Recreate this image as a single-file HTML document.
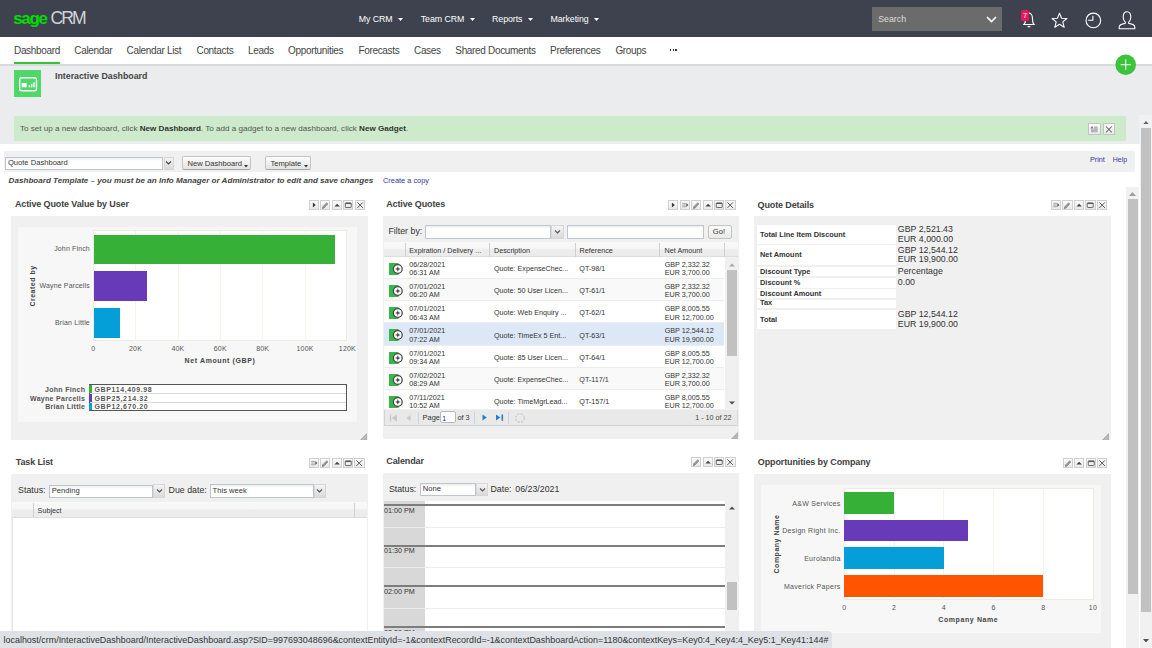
<!DOCTYPE html>
<html><head><meta charset="utf-8"><title>Sage CRM</title>
<style>
html,body{margin:0;padding:0;width:1152px;height:648px;overflow:hidden;background:#fff;font-family:"Liberation Sans",sans-serif;}
.t{position:absolute;line-height:1;white-space:nowrap;}
.r{position:absolute;}
.btn{position:absolute;box-sizing:border-box;border:1px solid #cfcfcf;background:linear-gradient(#fbfbfb,#e9e9e9);}
.inp{position:absolute;box-sizing:border-box;border:1px solid #bfc3d2;background:linear-gradient(#eee 0,#fff 3px);}
.dd{position:absolute;box-sizing:border-box;border:1px solid #d6d6d6;background:linear-gradient(#f4f4f4,#dadada);}
</style></head><body>

<div class="r" style="left:0.00px;top:0.00px;width:1152.00px;height:36.70px;background:#3d424e;"></div>
<div class="t" style="left:13.20px;top:9.65px;font-size:17px;color:#00dc00;font-weight:bold;letter-spacing:-1.35px;">sage</div>
<div class="t" style="left:50.50px;top:9.64px;font-size:17.6px;color:#d2d3d8;letter-spacing:-1.9px;">CRM</div>
<div class="t" style="left:358.70px;top:14.52px;font-size:8.8px;color:#ffffff;letter-spacing:-0.05px;">My CRM</div>
<svg class="r" style="left:398.30px;top:17.50px;" width="5" height="3" viewBox="0 0 5 3"><path d="M0 0H5L2.5 3Z" fill="#fff"/></svg>
<div class="t" style="left:420.70px;top:14.52px;font-size:8.8px;color:#ffffff;letter-spacing:-0.05px;">Team CRM</div>
<svg class="r" style="left:470.00px;top:17.50px;" width="5" height="3" viewBox="0 0 5 3"><path d="M0 0H5L2.5 3Z" fill="#fff"/></svg>
<div class="t" style="left:492.00px;top:14.52px;font-size:8.8px;color:#ffffff;letter-spacing:-0.05px;">Reports</div>
<svg class="r" style="left:527.90px;top:17.50px;" width="5" height="3" viewBox="0 0 5 3"><path d="M0 0H5L2.5 3Z" fill="#fff"/></svg>
<div class="t" style="left:550.50px;top:14.52px;font-size:8.8px;color:#ffffff;letter-spacing:-0.05px;">Marketing</div>
<svg class="r" style="left:594.00px;top:17.50px;" width="5" height="3" viewBox="0 0 5 3"><path d="M0 0H5L2.5 3Z" fill="#fff"/></svg>
<div class="r" style="left:872.40px;top:7.10px;width:129.60px;height:23.60px;background:#6b6b6b;"></div>
<div class="t" style="left:878.20px;top:14.72px;font-size:8.8px;color:#dcdcdc;">Search</div>
<svg class="r" style="left:986.00px;top:15.50px;" width="11" height="7" viewBox="0 0 11 7"><path d="M1 1L5.5 5.5L10 1" stroke="#fff" stroke-width="1.7" fill="none"/></svg>
<svg class="r" style="left:1020.00px;top:9.00px;" width="18" height="20" viewBox="0 0 18 20"><path d="M4 15.5 Q5.5 14 5.5 10 Q5.5 4.5 9 4 Q12.5 4.5 12.5 10 Q12.5 14 14 15.5 Z" stroke="#fff" stroke-width="1.1" fill="none"/><path d="M7.8 17 Q9 19 10.2 17" stroke="#fff" stroke-width="1.1" fill="none"/></svg>
<div class="r" style="left:1021.20px;top:10.10px;width:7.60px;height:11.30px;background:#e8175d;border-radius:1.8px;"></div>
<div class="t" style="left:1023.00px;top:11.91px;font-size:7.4px;color:#fff;">7</div>
<svg class="r" style="left:1051.00px;top:11.80px;" width="17" height="17" viewBox="0 0 17 17"><path d="M8.5 1.2 L10.6 6.2 L15.9 6.5 L11.8 9.9 L13.2 15.3 L8.5 12.3 L3.8 15.3 L5.2 9.9 L1.1 6.5 L6.4 6.2 Z" stroke="#fff" stroke-width="1.1" fill="none" stroke-linejoin="round"/></svg>
<svg class="r" style="left:1084.00px;top:11.00px;" width="18" height="18" viewBox="0 0 18 18"><circle cx="9.35" cy="9.4" r="7.3" stroke="#fff" stroke-width="1.1" fill="none"/><path d="M8.9 4.7 V9.2 H4.1" stroke="#fff" stroke-width="1.1" fill="none"/></svg>
<svg class="r" style="left:1117.00px;top:10.00px;" width="20" height="20" viewBox="0 0 20 20"><path d="M10 1.8 C7.3 1.8 6.2 4 6.2 6.9 C6.2 9.4 7.2 11.2 8.3 12.2 L8.3 13.4 C5 13.9 2.2 14.7 2.2 17 V18.8 H17.8 V17 C17.8 14.7 15 13.9 11.7 13.4 L11.7 12.2 C12.8 11.2 13.8 9.4 13.8 6.9 C13.8 4 12.7 1.8 10 1.8 Z" stroke="#fff" stroke-width="1.1" fill="none" stroke-linejoin="round"/></svg>
<div class="r" style="left:0.00px;top:36.70px;width:1152.00px;height:27.30px;background:#ffffff;"></div>
<div class="t" style="left:14.00px;top:45.70px;font-size:10px;color:#444;letter-spacing:-0.33px;">Dashboard</div>
<div class="t" style="left:74.30px;top:45.70px;font-size:10px;color:#444;letter-spacing:-0.33px;">Calendar</div>
<div class="t" style="left:126.60px;top:45.70px;font-size:10px;color:#444;letter-spacing:-0.33px;">Calendar List</div>
<div class="t" style="left:196.50px;top:45.70px;font-size:10px;color:#444;letter-spacing:-0.33px;">Contacts</div>
<div class="t" style="left:248.00px;top:45.70px;font-size:10px;color:#444;letter-spacing:-0.33px;">Leads</div>
<div class="t" style="left:288.00px;top:45.70px;font-size:10px;color:#444;letter-spacing:-0.33px;">Opportunities</div>
<div class="t" style="left:358.40px;top:45.70px;font-size:10px;color:#444;letter-spacing:-0.33px;">Forecasts</div>
<div class="t" style="left:414.00px;top:45.70px;font-size:10px;color:#444;letter-spacing:-0.33px;">Cases</div>
<div class="t" style="left:455.30px;top:45.70px;font-size:10px;color:#444;letter-spacing:-0.33px;">Shared Documents</div>
<div class="t" style="left:550.10px;top:45.70px;font-size:10px;color:#444;letter-spacing:-0.33px;">Preferences</div>
<div class="t" style="left:615.40px;top:45.70px;font-size:10px;color:#444;letter-spacing:-0.33px;">Groups</div>
<div class="r" style="left:669.70px;top:49.10px;width:1.70px;height:1.80px;background:#333;"></div>
<div class="r" style="left:672.55px;top:49.10px;width:1.70px;height:1.80px;background:#333;"></div>
<div class="r" style="left:675.40px;top:49.10px;width:1.70px;height:1.80px;background:#333;"></div>
<div class="r" style="left:14.00px;top:62.10px;width:46.30px;height:2.00px;background:#36c436;"></div>
<div class="r" style="left:0.00px;top:64.10px;width:1152.00px;height:1.90px;background:#d9dadc;"></div>
<div class="r" style="left:0.00px;top:66.00px;width:1152.00px;height:77.80px;background:#ebecee;"></div>
<div class="r" style="left:13.50px;top:70.00px;width:27.30px;height:27.00px;background:#4dd868;"></div>
<svg class="r" style="left:13.50px;top:70.00px;" width="27.3" height="27" viewBox="0 0 27.3 27"><rect x="5.7" y="7.8" width="16.8" height="12.9" rx="2" stroke="#fff" stroke-width="1.4" fill="none"/><rect x="7.7" y="13" width="5" height="4.3" fill="#fff"/><rect x="14.6" y="15.3" width="1.5" height="2" fill="#fff"/><rect x="16.9" y="13.8" width="1.5" height="3.5" fill="#fff"/><rect x="19.2" y="12.3" width="1.5" height="5" fill="#fff"/></svg>
<div class="t" style="left:55.00px;top:71.52px;font-size:8.8px;color:#444;font-weight:bold;">Interactive Dashboard</div>
<svg class="r" style="left:1115.00px;top:54.00px;" width="22" height="22" viewBox="0 0 22 22"><circle cx="10.7" cy="10.7" r="10.3" fill="#39c43b"/><path d="M10.7 5.6V15.8M5.6 10.7H15.8" stroke="#fff" stroke-width="1.1"/></svg>
<div class="r" style="left:14.00px;top:115.80px;width:1111.80px;height:24.90px;background:#cdeacb;"></div>
<div class="t" style="left:20px;top:125.11px;font-size:8.1px;color:#555;">To set up a new dashboard, click <b style="color:#333">New Dashboard</b>. To add a gadget to a new dashboard, click <b style="color:#333">New Gadget</b>.</div>
<div class="btn" style="left:1088.4px;top:122.7px;width:12.2px;height:12.2px;border-color:#c4c4c4"></div>
<svg class="r" style="left:1088.40px;top:122.70px;" width="12.2" height="12.1" viewBox="0 0 12.2 12.1"><path d="M3.6 9.2V6.6H6.2V3.5H9.6V9.2Z" fill="#ababab"/><path d="M5.0 6.6V9.2M6.6 3.5V9.2M8.2 3.5V9.2" stroke="#d0d0d0" stroke-width="0.5"/><path d="M2.3 5.6H5.7L4.0 3.1Z" fill="#777"/><path d="M4.0 5.6V9.2" stroke="#999" stroke-width="0.9"/></svg>
<div class="btn" style="left:1103.2px;top:122.7px;width:11.9px;height:12.2px;border-color:#c4c4c4"></div>
<svg class="r" style="left:1103.20px;top:122.70px;" width="11.9" height="12.1" viewBox="0 0 11.9 12.1"><path d="M3.0 3.5L8.8 9.3M8.8 3.5L3.0 9.3" stroke="#6a6a6a" stroke-width="1.05"/></svg>
<div class="r" style="left:1139.30px;top:115.30px;width:12.70px;height:532.70px;background:#f1f1f1;"></div>
<svg class="r" style="left:1142.80px;top:120.80px;" width="6" height="3.5" viewBox="0 0 6 3.5"><path d="M0 3.5H6L3 0Z" fill="#606060"/></svg>
<div class="r" style="left:1141.00px;top:128.00px;width:10.00px;height:483.80px;background:#c1c1c1;"></div>
<svg class="r" style="left:1142.80px;top:638.60px;" width="6" height="3.5" viewBox="0 0 6 3.5"><path d="M0 0H6L3 3.5Z" fill="#505050"/></svg>
<div class="r" style="left:1139.30px;top:143.80px;width:0.50px;height:504.20px;background:#ffffff;"></div>
<div class="r" style="left:4.20px;top:150.70px;width:1131.00px;height:20.90px;background:#f0f0f0;"></div>
<div class="inp" style="left:5.1px;top:156.5px;width:157.5px;height:13.2px;"></div>
<div class="t" style="left:7.90px;top:159.24px;font-size:7.6px;color:#333;">Quote Dashboard</div>
<div class="dd" style="left:163.7px;top:156.5px;width:10.8px;height:13.2px;"></div>
<svg class="r" style="left:165.00px;top:161.00px;" width="7" height="4" viewBox="0 0 7 4"><path d="M1 0.5L3.5 3L6 0.5" stroke="#444" stroke-width="1.1" fill="none"/></svg>
<div class="btn" style="left:182.3px;top:156.4px;width:69px;height:13.8px;border-color:#c4c4c4;border-bottom-color:#a8a8a8;border-radius:2px;background:linear-gradient(#fdfdfd,#e2e2e2)"></div>
<div class="t" style="left:187.50px;top:159.84px;font-size:7.6px;color:#333;">New Dashboard</div>
<svg class="r" style="left:243.50px;top:165.00px;" width="4" height="3" viewBox="0 0 4 3"><path d="M0 0H4L2 2.5Z" fill="#333"/></svg>
<div class="btn" style="left:265.4px;top:156.4px;width:46.1px;height:13.8px;border-color:#c4c4c4;border-bottom-color:#a8a8a8;border-radius:2px;background:linear-gradient(#fdfdfd,#e2e2e2)"></div>
<div class="t" style="left:270.50px;top:159.84px;font-size:7.6px;color:#333;">Template</div>
<svg class="r" style="left:303.50px;top:165.00px;" width="4" height="3" viewBox="0 0 4 3"><path d="M0 0H4L2 2.5Z" fill="#333"/></svg>
<div class="t" style="left:1089.90px;top:155.79px;font-size:7.3px;color:#36369e;">Print</div>
<div class="t" style="left:1112.70px;top:156.05px;font-size:7.0px;color:#36369e;">Help</div>
<div class="t" style="left:8.60px;top:176.81px;font-size:8.1px;color:#444;font-weight:bold;font-style:italic;">Dashboard Template – you must be an Info Manager or Administrator to edit and save changes</div>
<div class="t" style="left:383.00px;top:177.11px;font-size:7.4px;color:#36369e;">Create a copy</div>
<div class="r" style="left:1126.20px;top:186.80px;width:12.60px;height:461.20px;background:#f1f1f1;"></div>
<svg class="r" style="left:1129.30px;top:191.50px;" width="7" height="4" viewBox="0 0 7 4"><path d="M0 4H7L3.5 0Z" fill="#a0a0a0"/></svg>
<div class="r" style="left:1127.70px;top:199.10px;width:10.20px;height:395.40px;background:#c1c1c1;"></div>
<div class="t" style="left:14.90px;top:200.25px;font-size:9px;color:#404040;font-weight:bold;letter-spacing:-0.12px;">Active Quote Value by User</div>
<div class="r" style="left:11.10px;top:216.20px;width:356.50px;height:223.80px;background:#f0f0f0;"></div>
<div class="btn" style="left:308.70px;top:200.00px;width:10.3px;height:10.3px;border-color:#d0d0d0"></div>
<svg class="r" style="left:308.70px;top:200.00px;width:10.3px;height:10.3px" width="10.4" height="10.4" viewBox="0 0 10.4 10.4"><path d="M3.9 2.6V7.6L6.9 5.1Z" fill="#3a3a3a"/></svg>
<div class="btn" style="left:320.15px;top:200.00px;width:10.3px;height:10.3px;border-color:#d0d0d0"></div>
<svg class="r" style="left:320.15px;top:200.00px;width:10.3px;height:10.3px" width="10.4" height="10.4" viewBox="0 0 10.4 10.4"><path d="M2.6 7.0L6.7 2.7L8.0 4.0L3.9 8.3Z" fill="#9a9a9a" stroke="#6a6a6a" stroke-width="0.5"/><path d="M2.0 8.9L2.6 7.0L3.9 8.3Z" fill="#555"/></svg>
<div class="btn" style="left:331.60px;top:200.00px;width:10.3px;height:10.3px;border-color:#d0d0d0"></div>
<svg class="r" style="left:331.60px;top:200.00px;width:10.3px;height:10.3px" width="10.4" height="10.4" viewBox="0 0 10.4 10.4"><path d="M2.4 6.6H8.0L5.2 3.7Z" fill="#444"/></svg>
<div class="btn" style="left:343.05px;top:200.00px;width:10.3px;height:10.3px;border-color:#d0d0d0"></div>
<svg class="r" style="left:343.05px;top:200.00px;width:10.3px;height:10.3px" width="10.4" height="10.4" viewBox="0 0 10.4 10.4"><rect x="2.3" y="2.9" width="6.0" height="4.7" rx="0.6" stroke="#5a5a5a" stroke-width="0.9" fill="none"/><path d="M2.3 3.5H8.3" stroke="#5a5a5a" stroke-width="1.2"/></svg>
<div class="btn" style="left:354.50px;top:200.00px;width:10.3px;height:10.3px;border-color:#d0d0d0"></div>
<svg class="r" style="left:354.50px;top:200.00px;width:10.3px;height:10.3px" width="10.4" height="10.4" viewBox="0 0 10.4 10.4"><path d="M2.4 2.4L8.0 8.0M8.0 2.4L2.4 8.0" stroke="#555" stroke-width="1.0"/></svg>
<svg class="r" style="left:360.00px;top:433.00px;" width="7" height="7" viewBox="0 0 7 7"><path d="M7 0V7H0Z" fill="#a8a8a8"/><path d="M7 2.3L2.3 7M7 4.6L4.6 7" stroke="#d8d8d8" stroke-width="0.7"/></svg>
<div class="r" style="left:17.60px;top:227.00px;width:339.90px;height:195.20px;background:#f7f7f7;"></div>
<div class="r" style="left:93.20px;top:230.40px;width:254.20px;height:110.80px;background:#ffffff;box-sizing:border-box;border:1px solid #e9ecdf;"></div>
<div class="r" style="left:135.20px;top:230.90px;width:0.80px;height:109.80px;background:#f2f4ee;"></div>
<div class="r" style="left:177.60px;top:230.90px;width:0.80px;height:109.80px;background:#f2f4ee;"></div>
<div class="r" style="left:219.90px;top:230.90px;width:0.80px;height:109.80px;background:#f2f4ee;"></div>
<div class="r" style="left:262.30px;top:230.90px;width:0.80px;height:109.80px;background:#f2f4ee;"></div>
<div class="r" style="left:304.70px;top:230.90px;width:0.80px;height:109.80px;background:#f2f4ee;"></div>
<div class="r" style="left:93.70px;top:234.60px;width:241.60px;height:29.40px;background:#36b037;"></div>
<div class="r" style="left:93.70px;top:271.40px;width:52.90px;height:29.20px;background:#673ab7;"></div>
<div class="r" style="left:93.70px;top:308.00px;width:26.50px;height:29.60px;background:#049fd9;"></div>
<div class="t" style="right:1062.10px;top:245.15px;font-size:7px;color:#555;letter-spacing:0.15px">John Finch</div>
<div class="t" style="right:1062.10px;top:282.25px;font-size:7px;color:#555;letter-spacing:0.15px">Wayne Parcells</div>
<div class="t" style="right:1062.10px;top:319.45px;font-size:7px;color:#555;letter-spacing:0.15px">Brian Little</div>
<div class="t" style="left:32px;top:285.7px;font-size:7px;font-weight:bold;color:#444;letter-spacing:0.5px;transform:translate(-50%,-50%) rotate(-90deg);">Created by</div>
<div class="t" style="left:93.20px;top:345.15px;font-size:7px;color:#555;letter-spacing:0.2px;transform:translateX(-50%)">0</div>
<div class="t" style="left:135.57px;top:345.15px;font-size:7px;color:#555;letter-spacing:0.2px;transform:translateX(-50%)">20K</div>
<div class="t" style="left:177.94px;top:345.15px;font-size:7px;color:#555;letter-spacing:0.2px;transform:translateX(-50%)">40K</div>
<div class="t" style="left:220.31px;top:345.15px;font-size:7px;color:#555;letter-spacing:0.2px;transform:translateX(-50%)">60K</div>
<div class="t" style="left:262.68px;top:345.15px;font-size:7px;color:#555;letter-spacing:0.2px;transform:translateX(-50%)">80K</div>
<div class="t" style="left:305.05px;top:345.15px;font-size:7px;color:#555;letter-spacing:0.2px;transform:translateX(-50%)">100K</div>
<div class="t" style="left:347.42px;top:345.15px;font-size:7px;color:#555;letter-spacing:0.2px;transform:translateX(-50%)">120K</div>
<div class="t" style="left:220px;top:356.65px;font-size:7px;font-weight:bold;color:#444;letter-spacing:0.6px;transform:translateX(-50%)">Net Amount (GBP)</div>
<div class="r" style="left:88.75px;top:384.25px;width:258.45px;height:27.05px;background:#ffffff;box-sizing:border-box;border:1.2px solid #555;"></div>
<div class="r" style="left:90.00px;top:393.10px;width:256.00px;height:0.70px;background:#d8d8d8;"></div>
<div class="r" style="left:90.00px;top:402.00px;width:256.00px;height:0.70px;background:#d8d8d8;"></div>
<div class="r" style="left:89.40px;top:385.40px;width:2.30px;height:7.70px;background:#36b037;"></div>
<div class="t" style="right:1066.70px;top:385.95px;font-size:7px;font-weight:bold;color:#555;letter-spacing:0.3px">John Finch</div>
<div class="t" style="left:94.50px;top:385.95px;font-size:7px;color:#555;font-weight:bold;letter-spacing:0.62px;">GBP114,409.98</div>
<div class="r" style="left:89.40px;top:393.80px;width:2.30px;height:8.20px;background:#673ab7;"></div>
<div class="t" style="right:1066.70px;top:394.65px;font-size:7px;font-weight:bold;color:#555;letter-spacing:0.3px">Wayne Parcells</div>
<div class="t" style="left:94.50px;top:394.65px;font-size:7px;color:#555;font-weight:bold;letter-spacing:0.62px;">GBP25,214.32</div>
<div class="r" style="left:89.40px;top:402.70px;width:2.30px;height:7.40px;background:#049fd9;"></div>
<div class="t" style="right:1066.70px;top:403.35px;font-size:7px;font-weight:bold;color:#555;letter-spacing:0.3px">Brian Little</div>
<div class="t" style="left:94.50px;top:403.35px;font-size:7px;color:#555;font-weight:bold;letter-spacing:0.62px;">GBP12,670.20</div>
<div class="t" style="left:386.20px;top:200.05px;font-size:9px;color:#404040;font-weight:bold;letter-spacing:-0.12px;">Active Quotes</div>
<div class="r" style="left:382.90px;top:215.90px;width:356.20px;height:223.00px;background:#f0f0f0;"></div>
<div class="btn" style="left:668.15px;top:200.00px;width:10.3px;height:10.3px;border-color:#d0d0d0"></div>
<svg class="r" style="left:668.15px;top:200.00px;width:10.3px;height:10.3px" width="10.4" height="10.4" viewBox="0 0 10.4 10.4"><path d="M3.9 2.6V7.6L6.9 5.1Z" fill="#3a3a3a"/></svg>
<div class="btn" style="left:679.60px;top:200.00px;width:10.3px;height:10.3px;border-color:#d0d0d0"></div>
<svg class="r" style="left:679.60px;top:200.00px;width:10.3px;height:10.3px" width="10.4" height="10.4" viewBox="0 0 10.4 10.4"><path d="M2.2 3.4H5.9M2.2 5.1H5.9M2.2 6.8H5.9" stroke="#9a9a9a" stroke-width="0.9"/><path d="M6.4 3.1V7.1L8.5 5.1Z" fill="#555"/></svg>
<div class="btn" style="left:691.05px;top:200.00px;width:10.3px;height:10.3px;border-color:#d0d0d0"></div>
<svg class="r" style="left:691.05px;top:200.00px;width:10.3px;height:10.3px" width="10.4" height="10.4" viewBox="0 0 10.4 10.4"><path d="M2.6 7.0L6.7 2.7L8.0 4.0L3.9 8.3Z" fill="#9a9a9a" stroke="#6a6a6a" stroke-width="0.5"/><path d="M2.0 8.9L2.6 7.0L3.9 8.3Z" fill="#555"/></svg>
<div class="btn" style="left:702.50px;top:200.00px;width:10.3px;height:10.3px;border-color:#d0d0d0"></div>
<svg class="r" style="left:702.50px;top:200.00px;width:10.3px;height:10.3px" width="10.4" height="10.4" viewBox="0 0 10.4 10.4"><path d="M2.4 6.6H8.0L5.2 3.7Z" fill="#444"/></svg>
<div class="btn" style="left:713.95px;top:200.00px;width:10.3px;height:10.3px;border-color:#d0d0d0"></div>
<svg class="r" style="left:713.95px;top:200.00px;width:10.3px;height:10.3px" width="10.4" height="10.4" viewBox="0 0 10.4 10.4"><rect x="2.3" y="2.9" width="6.0" height="4.7" rx="0.6" stroke="#5a5a5a" stroke-width="0.9" fill="none"/><path d="M2.3 3.5H8.3" stroke="#5a5a5a" stroke-width="1.2"/></svg>
<div class="btn" style="left:725.40px;top:200.00px;width:10.3px;height:10.3px;border-color:#d0d0d0"></div>
<svg class="r" style="left:725.40px;top:200.00px;width:10.3px;height:10.3px" width="10.4" height="10.4" viewBox="0 0 10.4 10.4"><path d="M2.4 2.4L8.0 8.0M8.0 2.4L2.4 8.0" stroke="#555" stroke-width="1.0"/></svg>
<svg class="r" style="left:731.00px;top:431.50px;" width="7" height="7" viewBox="0 0 7 7"><path d="M7 0V7H0Z" fill="#a8a8a8"/><path d="M7 2.3L2.3 7M7 4.6L4.6 7" stroke="#d8d8d8" stroke-width="0.7"/></svg>
<div class="t" style="left:388.50px;top:227.42px;font-size:8.8px;color:#333;">Filter by:</div>
<div class="inp" style="left:425.1px;top:225.3px;width:126px;height:13.4px;"></div>
<div class="dd" style="left:551px;top:225.3px;width:12.5px;height:13.4px;"></div>
<svg class="r" style="left:554.00px;top:230.00px;" width="7" height="4" viewBox="0 0 7 4"><path d="M1 0.5L3.5 3L6 0.5" stroke="#555" stroke-width="1.1" fill="none"/></svg>
<div class="inp" style="left:567.3px;top:225.3px;width:137.2px;height:13.4px;"></div>
<div class="btn" style="left:708.4px;top:224.6px;width:23.2px;height:14.1px;border-color:#c2c2c2;border-radius:2px;"></div>
<div class="t" style="left:712.80px;top:228.14px;font-size:7.6px;color:#333;">Go!</div>
<div class="r" style="left:383.50px;top:242.10px;width:354.80px;height:14.80px;background:linear-gradient(#f9f9f9 0,#f6f6f6 45%,#ededed 55%,#ebebeb 100%);box-sizing:border-box;border-bottom:1px solid #dedede;"></div>
<div class="r" style="left:404.70px;top:242.50px;width:1.00px;height:14.00px;background:#cfcfcf;"></div>
<div class="r" style="left:489.10px;top:242.50px;width:1.00px;height:14.00px;background:#cfcfcf;"></div>
<div class="r" style="left:574.90px;top:242.50px;width:1.00px;height:14.00px;background:#cfcfcf;"></div>
<div class="r" style="left:659.20px;top:242.50px;width:1.00px;height:14.00px;background:#cfcfcf;"></div>
<div class="r" style="left:723.80px;top:242.50px;width:1.00px;height:14.00px;background:#cfcfcf;"></div>
<div class="t" style="left:409.30px;top:246.68px;font-size:7.2px;color:#333;">Expiration / Delivery ...</div>
<div class="t" style="left:494.00px;top:246.68px;font-size:7.2px;color:#333;">Description</div>
<div class="t" style="left:579.60px;top:246.68px;font-size:7.2px;color:#333;">Reference</div>
<div class="t" style="left:664.60px;top:246.68px;font-size:7.2px;color:#333;">Net Amount</div>
<div class="r" style="left:383.5px;top:256.9px;width:355.6px;height:152.6px;overflow:hidden;background:#fff">
<div class="r" style="left:0;top:0.00px;width:340.8px;height:22.2px;background:#ffffff;box-sizing:border-box;border-bottom:1px solid #ededed"></div>
<svg class="r" style="left:5.6px;top:5.85px" width="15" height="13" viewBox="0 0 15 13"><rect x="0" y="0" width="9.5" height="12" fill="#39b54a"/><circle cx="8.8" cy="6" r="4.4" fill="#fff" stroke="#464646" stroke-width="1.3"/><path d="M8.8 3.3L9.6 5.2L11.5 6L9.6 6.8L8.8 8.7L8 6.8L6.1 6L8 5.2Z" fill="#464646"/></svg>
<div class="t" style="left:25.80px;top:3.88px;font-size:7.2px;color:#333">06/28/2021</div>
<div class="t" style="left:25.80px;top:12.28px;font-size:7.2px;color:#333">06:31 AM</div>
<div class="t" style="left:110.50px;top:8.08px;font-size:7.2px;color:#333">Quote: ExpenseChec...</div>
<div class="t" style="left:195.80px;top:8.08px;font-size:7.2px;color:#333">QT-98/1</div>
<div class="t" style="left:281.2px;top:3.88px;font-size:7.2px;color:#333">GBP 2,332.32</div>
<div class="t" style="left:281.2px;top:12.28px;font-size:7.2px;color:#333">EUR 3,700.00</div>
<div class="r" style="left:0;top:22.20px;width:340.8px;height:22.2px;background:#f9f9f9;box-sizing:border-box;border-bottom:1px solid #ededed"></div>
<svg class="r" style="left:5.6px;top:28.05px" width="15" height="13" viewBox="0 0 15 13"><rect x="0" y="0" width="9.5" height="12" fill="#39b54a"/><circle cx="8.8" cy="6" r="4.4" fill="#fff" stroke="#464646" stroke-width="1.3"/><path d="M8.8 3.3L9.6 5.2L11.5 6L9.6 6.8L8.8 8.7L8 6.8L6.1 6L8 5.2Z" fill="#464646"/></svg>
<div class="t" style="left:25.80px;top:26.08px;font-size:7.2px;color:#333">07/01/2021</div>
<div class="t" style="left:25.80px;top:34.48px;font-size:7.2px;color:#333">06:20 AM</div>
<div class="t" style="left:110.50px;top:30.28px;font-size:7.2px;color:#333">Quote: 50 User Licen...</div>
<div class="t" style="left:195.80px;top:30.28px;font-size:7.2px;color:#333">QT-61/1</div>
<div class="t" style="left:281.2px;top:26.08px;font-size:7.2px;color:#333">GBP 2,332.32</div>
<div class="t" style="left:281.2px;top:34.48px;font-size:7.2px;color:#333">EUR 3,700.00</div>
<div class="r" style="left:0;top:44.40px;width:340.8px;height:22.2px;background:#ffffff;box-sizing:border-box;border-bottom:1px solid #ededed"></div>
<svg class="r" style="left:5.6px;top:50.25px" width="15" height="13" viewBox="0 0 15 13"><rect x="0" y="0" width="9.5" height="12" fill="#39b54a"/><circle cx="8.8" cy="6" r="4.4" fill="#fff" stroke="#464646" stroke-width="1.3"/><path d="M8.8 3.3L9.6 5.2L11.5 6L9.6 6.8L8.8 8.7L8 6.8L6.1 6L8 5.2Z" fill="#464646"/></svg>
<div class="t" style="left:25.80px;top:48.28px;font-size:7.2px;color:#333">07/01/2021</div>
<div class="t" style="left:25.80px;top:56.68px;font-size:7.2px;color:#333">06:43 AM</div>
<div class="t" style="left:110.50px;top:52.48px;font-size:7.2px;color:#333">Quote: Web Enquiry ...</div>
<div class="t" style="left:195.80px;top:52.48px;font-size:7.2px;color:#333">QT-62/1</div>
<div class="t" style="left:281.2px;top:48.28px;font-size:7.2px;color:#333">GBP 8,005.55</div>
<div class="t" style="left:281.2px;top:56.68px;font-size:7.2px;color:#333">EUR 12,700.00</div>
<div class="r" style="left:0;top:66.60px;width:340.8px;height:22.2px;background:#dde8f7;box-sizing:border-box;border-bottom:1px solid #ededed"></div>
<svg class="r" style="left:5.6px;top:72.45px" width="15" height="13" viewBox="0 0 15 13"><rect x="0" y="0" width="9.5" height="12" fill="#39b54a"/><circle cx="8.8" cy="6" r="4.4" fill="#fff" stroke="#464646" stroke-width="1.3"/><path d="M8.8 3.3L9.6 5.2L11.5 6L9.6 6.8L8.8 8.7L8 6.8L6.1 6L8 5.2Z" fill="#464646"/></svg>
<div class="t" style="left:25.80px;top:70.48px;font-size:7.2px;color:#333">07/01/2021</div>
<div class="t" style="left:25.80px;top:78.88px;font-size:7.2px;color:#333">07:22 AM</div>
<div class="t" style="left:110.50px;top:74.68px;font-size:7.2px;color:#333">Quote: TimeEx 5 Ent...</div>
<div class="t" style="left:195.80px;top:74.68px;font-size:7.2px;color:#333">QT-63/1</div>
<div class="t" style="left:281.2px;top:70.48px;font-size:7.2px;color:#333">GBP 12,544.12</div>
<div class="t" style="left:281.2px;top:78.88px;font-size:7.2px;color:#333">EUR 19,900.00</div>
<div class="r" style="left:0;top:88.80px;width:340.8px;height:22.2px;background:#ffffff;box-sizing:border-box;border-bottom:1px solid #ededed"></div>
<svg class="r" style="left:5.6px;top:94.65px" width="15" height="13" viewBox="0 0 15 13"><rect x="0" y="0" width="9.5" height="12" fill="#39b54a"/><circle cx="8.8" cy="6" r="4.4" fill="#fff" stroke="#464646" stroke-width="1.3"/><path d="M8.8 3.3L9.6 5.2L11.5 6L9.6 6.8L8.8 8.7L8 6.8L6.1 6L8 5.2Z" fill="#464646"/></svg>
<div class="t" style="left:25.80px;top:92.68px;font-size:7.2px;color:#333">07/01/2021</div>
<div class="t" style="left:25.80px;top:101.08px;font-size:7.2px;color:#333">09:34 AM</div>
<div class="t" style="left:110.50px;top:96.88px;font-size:7.2px;color:#333">Quote: 85 User Licen...</div>
<div class="t" style="left:195.80px;top:96.88px;font-size:7.2px;color:#333">QT-64/1</div>
<div class="t" style="left:281.2px;top:92.68px;font-size:7.2px;color:#333">GBP 8,005.55</div>
<div class="t" style="left:281.2px;top:101.08px;font-size:7.2px;color:#333">EUR 12,700.00</div>
<div class="r" style="left:0;top:111.00px;width:340.8px;height:22.2px;background:#f9f9f9;box-sizing:border-box;border-bottom:1px solid #ededed"></div>
<svg class="r" style="left:5.6px;top:116.85px" width="15" height="13" viewBox="0 0 15 13"><rect x="0" y="0" width="9.5" height="12" fill="#39b54a"/><circle cx="8.8" cy="6" r="4.4" fill="#fff" stroke="#464646" stroke-width="1.3"/><path d="M8.8 3.3L9.6 5.2L11.5 6L9.6 6.8L8.8 8.7L8 6.8L6.1 6L8 5.2Z" fill="#464646"/></svg>
<div class="t" style="left:25.80px;top:114.88px;font-size:7.2px;color:#333">07/02/2021</div>
<div class="t" style="left:25.80px;top:123.28px;font-size:7.2px;color:#333">08:29 AM</div>
<div class="t" style="left:110.50px;top:119.08px;font-size:7.2px;color:#333">Quote: ExpenseChec...</div>
<div class="t" style="left:195.80px;top:119.08px;font-size:7.2px;color:#333">QT-117/1</div>
<div class="t" style="left:281.2px;top:114.88px;font-size:7.2px;color:#333">GBP 2,332.32</div>
<div class="t" style="left:281.2px;top:123.28px;font-size:7.2px;color:#333">EUR 3,700.00</div>
<div class="r" style="left:0;top:133.20px;width:340.8px;height:22.2px;background:#ffffff;box-sizing:border-box;border-bottom:1px solid #ededed"></div>
<svg class="r" style="left:5.6px;top:139.05px" width="15" height="13" viewBox="0 0 15 13"><rect x="0" y="0" width="9.5" height="12" fill="#39b54a"/><circle cx="8.8" cy="6" r="4.4" fill="#fff" stroke="#464646" stroke-width="1.3"/><path d="M8.8 3.3L9.6 5.2L11.5 6L9.6 6.8L8.8 8.7L8 6.8L6.1 6L8 5.2Z" fill="#464646"/></svg>
<div class="t" style="left:25.80px;top:137.08px;font-size:7.2px;color:#333">07/11/2021</div>
<div class="t" style="left:25.80px;top:145.48px;font-size:7.2px;color:#333">10:52 AM</div>
<div class="t" style="left:110.50px;top:141.28px;font-size:7.2px;color:#333">Quote: TimeMgrLead...</div>
<div class="t" style="left:195.80px;top:141.28px;font-size:7.2px;color:#333">QT-157/1</div>
<div class="t" style="left:281.2px;top:137.08px;font-size:7.2px;color:#333">GBP 8,005.55</div>
<div class="t" style="left:281.2px;top:145.48px;font-size:7.2px;color:#333">EUR 12,700.00</div>
</div>
<div class="r" style="left:724.80px;top:256.90px;width:14.30px;height:152.60px;background:#f0f0f0;"></div>
<svg class="r" style="left:729.20px;top:262.60px;" width="6" height="4" viewBox="0 0 6 4"><path d="M0 3.5H6L3 0.5Z" fill="#a8a8a8"/></svg>
<div class="r" style="left:727.00px;top:269.80px;width:9.80px;height:85.90px;background:#c1c1c1;"></div>
<svg class="r" style="left:729.20px;top:400.50px;" width="6" height="4" viewBox="0 0 6 4"><path d="M0 0.5H6L3 3.5Z" fill="#505050"/></svg>
<div class="r" style="left:383.50px;top:409.50px;width:354.50px;height:16.70px;background:#e9e9e9;box-sizing:border-box;border-bottom:1px solid #d2d2d2;border-right:1px solid #dcdcdc;border-left:1px solid #d2d2d2"></div>
<svg class="r" style="left:389.00px;top:412.50px;" width="10" height="10" viewBox="0 0 10 10"><path d="M1.5 1.5V8.5" stroke="#c8c8c8" stroke-width="1.3"/><path d="M8 1.5V8.5L2.5 5Z" fill="#c8c8c8"/></svg>
<svg class="r" style="left:404.50px;top:412.50px;" width="8" height="10" viewBox="0 0 8 10"><path d="M5.5 2V8L1.5 5Z" fill="#c8c8c8"/></svg>
<div class="r" style="left:418.10px;top:411.50px;width:0.80px;height:12.50px;background:#c5d5ea;"></div>
<div class="t" style="left:422.60px;top:414.21px;font-size:7.4px;color:#333;">Page</div>
<div class="r" style="left:440px;top:411.3px;width:15.5px;height:12.2px;box-sizing:border-box;border:1px solid #b5b8c8;border-radius:2px;background:#fff"></div>
<div class="t" style="left:442.20px;top:415.18px;font-size:7.2px;color:#333;">1</div>
<div class="t" style="left:457.40px;top:414.21px;font-size:7.4px;color:#333;">of 3</div>
<div class="r" style="left:474.00px;top:411.50px;width:0.80px;height:12.50px;background:#c5d5ea;"></div>
<svg class="r" style="left:480.50px;top:413.00px;" width="8" height="9" viewBox="0 0 8 9"><path d="M1.5 1.5V7.5L5.8 4.5Z" fill="#2a7ad4"/></svg>
<svg class="r" style="left:494.50px;top:413.00px;" width="10" height="9" viewBox="0 0 10 9"><path d="M1 1.5V7.5L5.3 4.5Z" fill="#2a7ad4"/><path d="M7.3 1.5V7.8" stroke="#2a7ad4" stroke-width="1.6"/></svg>
<div class="r" style="left:508.10px;top:411.50px;width:0.80px;height:12.50px;background:#c5d5ea;"></div>
<svg class="r" style="left:513.50px;top:412.20px;" width="12" height="12" viewBox="0 0 12 12"><circle cx="6" cy="6" r="4.3" stroke="#cfcfcf" stroke-width="1.6" stroke-dasharray="2 1.4" fill="none"/></svg>
<div class="t" style="right:420.40px;top:413.78px;font-size:7.2px;color:#444">1 - 10 of 22</div>
<div class="t" style="left:757.50px;top:200.75px;font-size:9px;color:#404040;font-weight:bold;letter-spacing:-0.12px;">Quote Details</div>
<div class="r" style="left:754.00px;top:215.80px;width:356.80px;height:224.40px;background:#f0f0f0;"></div>
<div class="btn" style="left:1050.90px;top:199.80px;width:10.3px;height:10.3px;border-color:#d0d0d0"></div>
<svg class="r" style="left:1050.90px;top:199.80px;width:10.3px;height:10.3px" width="10.4" height="10.4" viewBox="0 0 10.4 10.4"><path d="M2.2 3.4H5.9M2.2 5.1H5.9M2.2 6.8H5.9" stroke="#9a9a9a" stroke-width="0.9"/><path d="M6.4 3.1V7.1L8.5 5.1Z" fill="#555"/></svg>
<div class="btn" style="left:1062.35px;top:199.80px;width:10.3px;height:10.3px;border-color:#d0d0d0"></div>
<svg class="r" style="left:1062.35px;top:199.80px;width:10.3px;height:10.3px" width="10.4" height="10.4" viewBox="0 0 10.4 10.4"><path d="M2.6 7.0L6.7 2.7L8.0 4.0L3.9 8.3Z" fill="#9a9a9a" stroke="#6a6a6a" stroke-width="0.5"/><path d="M2.0 8.9L2.6 7.0L3.9 8.3Z" fill="#555"/></svg>
<div class="btn" style="left:1073.80px;top:199.80px;width:10.3px;height:10.3px;border-color:#d0d0d0"></div>
<svg class="r" style="left:1073.80px;top:199.80px;width:10.3px;height:10.3px" width="10.4" height="10.4" viewBox="0 0 10.4 10.4"><path d="M2.4 6.6H8.0L5.2 3.7Z" fill="#444"/></svg>
<div class="btn" style="left:1085.25px;top:199.80px;width:10.3px;height:10.3px;border-color:#d0d0d0"></div>
<svg class="r" style="left:1085.25px;top:199.80px;width:10.3px;height:10.3px" width="10.4" height="10.4" viewBox="0 0 10.4 10.4"><rect x="2.3" y="2.9" width="6.0" height="4.7" rx="0.6" stroke="#5a5a5a" stroke-width="0.9" fill="none"/><path d="M2.3 3.5H8.3" stroke="#5a5a5a" stroke-width="1.2"/></svg>
<div class="btn" style="left:1096.70px;top:199.80px;width:10.3px;height:10.3px;border-color:#d0d0d0"></div>
<svg class="r" style="left:1096.70px;top:199.80px;width:10.3px;height:10.3px" width="10.4" height="10.4" viewBox="0 0 10.4 10.4"><path d="M2.4 2.4L8.0 8.0M8.0 2.4L2.4 8.0" stroke="#555" stroke-width="1.0"/></svg>
<svg class="r" style="left:1101.60px;top:433.00px;" width="7" height="7" viewBox="0 0 7 7"><path d="M7 0V7H0Z" fill="#a8a8a8"/><path d="M7 2.3L2.3 7M7 4.6L4.6 7" stroke="#d8d8d8" stroke-width="0.7"/></svg>
<div class="r" style="left:756.90px;top:225.00px;width:139.35px;height:19.00px;background:#ffffff;"></div>
<div class="t" style="left:760.00px;top:230.56px;font-size:7.4px;color:#333;font-weight:bold;">Total Line Item Discount</div>
<div class="t" style="left:897.80px;top:225.02px;font-size:8.8px;color:#333;">GBP 2,521.43</div>
<div class="t" style="left:897.80px;top:234.82px;font-size:8.8px;color:#333;">EUR 4,000.00</div>
<div class="r" style="left:756.90px;top:245.30px;width:139.35px;height:19.70px;background:#ffffff;"></div>
<div class="t" style="left:760.00px;top:250.71px;font-size:7.4px;color:#333;font-weight:bold;">Net Amount</div>
<div class="t" style="left:897.80px;top:245.52px;font-size:8.8px;color:#333;">GBP 12,544.12</div>
<div class="t" style="left:897.80px;top:255.22px;font-size:8.8px;color:#333;">EUR 19,900.00</div>
<div class="r" style="left:756.90px;top:266.70px;width:139.35px;height:9.70px;background:#ffffff;"></div>
<div class="t" style="left:760.00px;top:268.01px;font-size:7.4px;color:#333;font-weight:bold;">Discount Type</div>
<div class="t" style="left:897.80px;top:267.32px;font-size:8.8px;color:#333;">Percentage</div>
<div class="r" style="left:756.90px;top:278.00px;width:139.35px;height:9.70px;background:#ffffff;"></div>
<div class="t" style="left:760.00px;top:278.81px;font-size:7.4px;color:#333;font-weight:bold;">Discount %</div>
<div class="t" style="left:897.80px;top:278.12px;font-size:8.8px;color:#333;">0.00</div>
<div class="r" style="left:756.90px;top:289.40px;width:139.35px;height:8.60px;background:#ffffff;"></div>
<div class="t" style="left:760.00px;top:290.01px;font-size:7.4px;color:#333;font-weight:bold;">Discount Amount</div>
<div class="r" style="left:756.90px;top:299.50px;width:139.35px;height:8.30px;background:#ffffff;"></div>
<div class="t" style="left:760.00px;top:299.31px;font-size:7.4px;color:#333;font-weight:bold;">Tax</div>
<div class="r" style="left:756.90px;top:309.50px;width:139.35px;height:19.90px;background:#ffffff;"></div>
<div class="t" style="left:760.00px;top:315.91px;font-size:7.4px;color:#333;font-weight:bold;">Total</div>
<div class="t" style="left:897.80px;top:310.32px;font-size:8.8px;color:#333;">GBP 12,544.12</div>
<div class="t" style="left:897.80px;top:320.02px;font-size:8.8px;color:#333;">EUR 19,900.00</div>
<div class="t" style="left:15.70px;top:458.25px;font-size:9px;color:#404040;font-weight:bold;letter-spacing:-0.12px;">Task List</div>
<div class="r" style="left:11.05px;top:474.10px;width:356.55px;height:173.90px;background:#f0f0f0;"></div>
<div class="btn" style="left:308.60px;top:457.80px;width:10.3px;height:10.3px;border-color:#d0d0d0"></div>
<svg class="r" style="left:308.60px;top:457.80px;width:10.3px;height:10.3px" width="10.4" height="10.4" viewBox="0 0 10.4 10.4"><path d="M2.2 3.4H5.9M2.2 5.1H5.9M2.2 6.8H5.9" stroke="#9a9a9a" stroke-width="0.9"/><path d="M6.4 3.1V7.1L8.5 5.1Z" fill="#555"/></svg>
<div class="btn" style="left:320.05px;top:457.80px;width:10.3px;height:10.3px;border-color:#d0d0d0"></div>
<svg class="r" style="left:320.05px;top:457.80px;width:10.3px;height:10.3px" width="10.4" height="10.4" viewBox="0 0 10.4 10.4"><path d="M2.6 7.0L6.7 2.7L8.0 4.0L3.9 8.3Z" fill="#9a9a9a" stroke="#6a6a6a" stroke-width="0.5"/><path d="M2.0 8.9L2.6 7.0L3.9 8.3Z" fill="#555"/></svg>
<div class="btn" style="left:331.50px;top:457.80px;width:10.3px;height:10.3px;border-color:#d0d0d0"></div>
<svg class="r" style="left:331.50px;top:457.80px;width:10.3px;height:10.3px" width="10.4" height="10.4" viewBox="0 0 10.4 10.4"><path d="M2.4 6.6H8.0L5.2 3.7Z" fill="#444"/></svg>
<div class="btn" style="left:342.95px;top:457.80px;width:10.3px;height:10.3px;border-color:#d0d0d0"></div>
<svg class="r" style="left:342.95px;top:457.80px;width:10.3px;height:10.3px" width="10.4" height="10.4" viewBox="0 0 10.4 10.4"><rect x="2.3" y="2.9" width="6.0" height="4.7" rx="0.6" stroke="#5a5a5a" stroke-width="0.9" fill="none"/><path d="M2.3 3.5H8.3" stroke="#5a5a5a" stroke-width="1.2"/></svg>
<div class="btn" style="left:354.40px;top:457.80px;width:10.3px;height:10.3px;border-color:#d0d0d0"></div>
<svg class="r" style="left:354.40px;top:457.80px;width:10.3px;height:10.3px" width="10.4" height="10.4" viewBox="0 0 10.4 10.4"><path d="M2.4 2.4L8.0 8.0M8.0 2.4L2.4 8.0" stroke="#555" stroke-width="1.0"/></svg>
<div class="t" style="left:386.30px;top:456.95px;font-size:9px;color:#404040;font-weight:bold;letter-spacing:-0.12px;">Calendar</div>
<div class="r" style="left:382.80px;top:472.80px;width:356.40px;height:175.20px;background:#f0f0f0;"></div>
<div class="btn" style="left:691.05px;top:456.50px;width:10.3px;height:10.3px;border-color:#d0d0d0"></div>
<svg class="r" style="left:691.05px;top:456.50px;width:10.3px;height:10.3px" width="10.4" height="10.4" viewBox="0 0 10.4 10.4"><path d="M2.6 7.0L6.7 2.7L8.0 4.0L3.9 8.3Z" fill="#9a9a9a" stroke="#6a6a6a" stroke-width="0.5"/><path d="M2.0 8.9L2.6 7.0L3.9 8.3Z" fill="#555"/></svg>
<div class="btn" style="left:702.50px;top:456.50px;width:10.3px;height:10.3px;border-color:#d0d0d0"></div>
<svg class="r" style="left:702.50px;top:456.50px;width:10.3px;height:10.3px" width="10.4" height="10.4" viewBox="0 0 10.4 10.4"><path d="M2.4 6.6H8.0L5.2 3.7Z" fill="#444"/></svg>
<div class="btn" style="left:713.95px;top:456.50px;width:10.3px;height:10.3px;border-color:#d0d0d0"></div>
<svg class="r" style="left:713.95px;top:456.50px;width:10.3px;height:10.3px" width="10.4" height="10.4" viewBox="0 0 10.4 10.4"><rect x="2.3" y="2.9" width="6.0" height="4.7" rx="0.6" stroke="#5a5a5a" stroke-width="0.9" fill="none"/><path d="M2.3 3.5H8.3" stroke="#5a5a5a" stroke-width="1.2"/></svg>
<div class="btn" style="left:725.40px;top:456.50px;width:10.3px;height:10.3px;border-color:#d0d0d0"></div>
<svg class="r" style="left:725.40px;top:456.50px;width:10.3px;height:10.3px" width="10.4" height="10.4" viewBox="0 0 10.4 10.4"><path d="M2.4 2.4L8.0 8.0M8.0 2.4L2.4 8.0" stroke="#555" stroke-width="1.0"/></svg>
<div class="t" style="left:757.80px;top:458.15px;font-size:9px;color:#404040;font-weight:bold;letter-spacing:-0.12px;">Opportunities by Company</div>
<div class="r" style="left:754.30px;top:474.00px;width:356.60px;height:174.00px;background:#f0f0f0;"></div>
<div class="btn" style="left:1062.65px;top:457.60px;width:10.3px;height:10.3px;border-color:#d0d0d0"></div>
<svg class="r" style="left:1062.65px;top:457.60px;width:10.3px;height:10.3px" width="10.4" height="10.4" viewBox="0 0 10.4 10.4"><path d="M2.6 7.0L6.7 2.7L8.0 4.0L3.9 8.3Z" fill="#9a9a9a" stroke="#6a6a6a" stroke-width="0.5"/><path d="M2.0 8.9L2.6 7.0L3.9 8.3Z" fill="#555"/></svg>
<div class="btn" style="left:1074.10px;top:457.60px;width:10.3px;height:10.3px;border-color:#d0d0d0"></div>
<svg class="r" style="left:1074.10px;top:457.60px;width:10.3px;height:10.3px" width="10.4" height="10.4" viewBox="0 0 10.4 10.4"><path d="M2.4 6.6H8.0L5.2 3.7Z" fill="#444"/></svg>
<div class="btn" style="left:1085.55px;top:457.60px;width:10.3px;height:10.3px;border-color:#d0d0d0"></div>
<svg class="r" style="left:1085.55px;top:457.60px;width:10.3px;height:10.3px" width="10.4" height="10.4" viewBox="0 0 10.4 10.4"><rect x="2.3" y="2.9" width="6.0" height="4.7" rx="0.6" stroke="#5a5a5a" stroke-width="0.9" fill="none"/><path d="M2.3 3.5H8.3" stroke="#5a5a5a" stroke-width="1.2"/></svg>
<div class="btn" style="left:1097.00px;top:457.60px;width:10.3px;height:10.3px;border-color:#d0d0d0"></div>
<svg class="r" style="left:1097.00px;top:457.60px;width:10.3px;height:10.3px" width="10.4" height="10.4" viewBox="0 0 10.4 10.4"><path d="M2.4 2.4L8.0 8.0M8.0 2.4L2.4 8.0" stroke="#555" stroke-width="1.0"/></svg>
<div class="t" style="left:18.10px;top:486.32px;font-size:8.8px;color:#333;">Status:</div>
<div class="inp" style="left:49.2px;top:484.5px;width:103.6px;height:13.2px;"></div>
<div class="t" style="left:51.80px;top:486.64px;font-size:7.6px;color:#333;">Pending</div>
<div class="dd" style="left:152.8px;top:484.4px;width:12.4px;height:13.5px;"></div>
<svg class="r" style="left:155.50px;top:489.30px;" width="7" height="4" viewBox="0 0 7 4"><path d="M1 0.5L3.5 3L6 0.5" stroke="#555" stroke-width="1.1" fill="none"/></svg>
<div class="t" style="left:168.60px;top:486.32px;font-size:8.8px;color:#333;">Due date:</div>
<div class="inp" style="left:210px;top:484.4px;width:103.8px;height:13.3px;"></div>
<div class="t" style="left:212.60px;top:486.64px;font-size:7.6px;color:#333;">This week</div>
<div class="dd" style="left:313.8px;top:484.3px;width:12.2px;height:13.5px;"></div>
<svg class="r" style="left:316.40px;top:489.30px;" width="7" height="4" viewBox="0 0 7 4"><path d="M1 0.5L3.5 3L6 0.5" stroke="#555" stroke-width="1.1" fill="none"/></svg>
<div class="r" style="left:11.50px;top:502.30px;width:355.20px;height:15.80px;background:linear-gradient(#f9f9f9 0,#f6f6f6 45%,#ededed 55%,#ebebeb 100%);box-sizing:border-box;border-bottom:1px solid #dedede;"></div>
<div class="r" style="left:33.00px;top:502.80px;width:1.00px;height:14.20px;background:#d0d0d0;"></div>
<div class="r" style="left:354.30px;top:502.80px;width:1.00px;height:14.20px;background:#d0d0d0;"></div>
<div class="t" style="left:37.60px;top:507.08px;font-size:7.2px;color:#333;">Subject</div>
<div class="r" style="left:11.50px;top:518.10px;width:355.20px;height:129.90px;background:#ffffff;box-sizing:border-box;border-left:1px solid #e6e6e6;"></div>
<div class="t" style="left:388.90px;top:484.82px;font-size:8.8px;color:#333;">Status:</div>
<div class="inp" style="left:420.1px;top:483.2px;width:56px;height:12.8px;"></div>
<div class="t" style="left:422.80px;top:485.24px;font-size:7.6px;color:#333;">None</div>
<div class="dd" style="left:476.1px;top:483.1px;width:11.5px;height:13px;"></div>
<svg class="r" style="left:478.50px;top:487.80px;" width="7" height="4" viewBox="0 0 7 4"><path d="M1 0.5L3.5 3L6 0.5" stroke="#555" stroke-width="1.1" fill="none"/></svg>
<div class="t" style="left:490.50px;top:484.82px;font-size:8.8px;color:#333;">Date:</div>
<div class="t" style="left:515.30px;top:484.82px;font-size:8.8px;color:#333;">06/23/2021</div>
<div class="r" style="left:383.90px;top:500.90px;width:341.10px;height:147.10px;background:#ffffff;"></div>
<div class="r" style="left:383.90px;top:500.90px;width:40.80px;height:147.10px;background:#d8d8d8;"></div>
<div class="r" style="left:383.90px;top:503.90px;width:341.10px;height:2.00px;background:#7d7d7d;"></div>
<div class="r" style="left:383.90px;top:526.50px;width:40.80px;height:0.80px;background:#ececec;"></div>
<div class="r" style="left:424.70px;top:526.50px;width:300.30px;height:0.80px;background:#ebebeb;"></div>
<div class="r" style="left:383.90px;top:544.50px;width:341.10px;height:2.00px;background:#7d7d7d;"></div>
<div class="r" style="left:383.90px;top:567.10px;width:40.80px;height:0.80px;background:#ececec;"></div>
<div class="r" style="left:424.70px;top:567.10px;width:300.30px;height:0.80px;background:#ebebeb;"></div>
<div class="r" style="left:383.90px;top:585.10px;width:341.10px;height:2.00px;background:#7d7d7d;"></div>
<div class="r" style="left:383.90px;top:607.70px;width:40.80px;height:0.80px;background:#ececec;"></div>
<div class="r" style="left:424.70px;top:607.70px;width:300.30px;height:0.80px;background:#ebebeb;"></div>
<div class="r" style="left:383.90px;top:625.70px;width:341.10px;height:2.00px;background:#7d7d7d;"></div>
<div class="r" style="left:383.90px;top:648.30px;width:40.80px;height:0.80px;background:#ececec;"></div>
<div class="r" style="left:424.70px;top:648.30px;width:300.30px;height:0.80px;background:#ebebeb;"></div>
<div class="t" style="left:384.00px;top:506.78px;font-size:7.2px;color:#333;">01:00 PM</div>
<div class="t" style="left:384.00px;top:547.38px;font-size:7.2px;color:#333;">01:30 PM</div>
<div class="t" style="left:384.00px;top:587.98px;font-size:7.2px;color:#333;">02:00 PM</div>
<div class="t" style="left:384.00px;top:628.58px;font-size:7.2px;color:#333;">02:30 PM</div>
<div class="r" style="left:725.00px;top:500.90px;width:14.20px;height:147.10px;background:#f0f0f0;"></div>
<svg class="r" style="left:729.20px;top:506.00px;" width="6" height="4" viewBox="0 0 6 4"><path d="M0 3.5H6L3 0.5Z" fill="#505050"/></svg>
<div class="r" style="left:727.40px;top:582.30px;width:9.20px;height:28.10px;background:#c1c1c1;"></div>
<div class="r" style="left:761.30px;top:485.00px;width:339.70px;height:147.70px;background:#f7f7f7;"></div>
<div class="r" style="left:843.75px;top:488.40px;width:249.85px;height:111.80px;background:#ffffff;box-sizing:border-box;border:1px solid #e9ecdf;"></div>
<div class="r" style="left:893.60px;top:488.90px;width:0.80px;height:110.80px;background:#f2f4ee;"></div>
<div class="r" style="left:943.30px;top:488.90px;width:0.80px;height:110.80px;background:#f2f4ee;"></div>
<div class="r" style="left:993.00px;top:488.90px;width:0.80px;height:110.80px;background:#f2f4ee;"></div>
<div class="r" style="left:1042.70px;top:488.90px;width:0.80px;height:110.80px;background:#f2f4ee;"></div>
<div class="r" style="left:844.30px;top:492.30px;width:49.70px;height:21.40px;background:#36b037;"></div>
<div class="r" style="left:844.30px;top:519.90px;width:124.20px;height:21.60px;background:#673ab7;"></div>
<div class="r" style="left:844.30px;top:547.00px;width:99.40px;height:22.30px;background:#049fd9;"></div>
<div class="r" style="left:844.30px;top:575.30px;width:198.80px;height:21.60px;background:#ff5500;"></div>
<div class="t" style="right:311.40px;top:499.55px;font-size:7px;color:#555;letter-spacing:0.3px">A&amp;W Services</div>
<div class="t" style="right:311.40px;top:527.25px;font-size:7px;color:#555;letter-spacing:0.3px">Design Right Inc.</div>
<div class="t" style="right:311.40px;top:554.75px;font-size:7px;color:#555;letter-spacing:0.3px">Eurolandia</div>
<div class="t" style="right:311.40px;top:582.55px;font-size:7px;color:#555;letter-spacing:0.3px">Maverick Papers</div>
<div class="t" style="left:775.7px;top:544.2px;font-size:7px;font-weight:bold;color:#444;letter-spacing:0.5px;transform:translate(-50%,-50%) rotate(-90deg);">Company Name</div>
<div class="t" style="left:844.40px;top:604.35px;font-size:7px;color:#555;letter-spacing:0.2px;transform:translateX(-50%)">0</div>
<div class="t" style="left:894.10px;top:604.35px;font-size:7px;color:#555;letter-spacing:0.2px;transform:translateX(-50%)">2</div>
<div class="t" style="left:943.80px;top:604.35px;font-size:7px;color:#555;letter-spacing:0.2px;transform:translateX(-50%)">4</div>
<div class="t" style="left:993.50px;top:604.35px;font-size:7px;color:#555;letter-spacing:0.2px;transform:translateX(-50%)">6</div>
<div class="t" style="left:1043.20px;top:604.35px;font-size:7px;color:#555;letter-spacing:0.2px;transform:translateX(-50%)">8</div>
<div class="t" style="left:1092.90px;top:604.35px;font-size:7px;color:#555;letter-spacing:0.2px;transform:translateX(-50%)">10</div>
<div class="t" style="left:968.3px;top:615.75px;font-size:7px;font-weight:bold;color:#444;letter-spacing:0.6px;transform:translateX(-50%)">Company Name</div>
<div class="r" style="left:0;top:631.25px;width:832px;height:16.75px;background:#dee1e6;border-top-right-radius:4px;"></div>
<div class="t" style="left:3.50px;top:635.79px;font-size:8.95px;color:#333;">localhost/crm/InteractiveDashboard/InteractiveDashboard.asp?SID=997693048696&amp;contextEntityId=-1&amp;contextRecordId=-1&amp;contextDashboardAction=1180&amp;contextKeys=Key0:4_Key4:4_Key5:1_Key41:144#</div>
</body></html>
